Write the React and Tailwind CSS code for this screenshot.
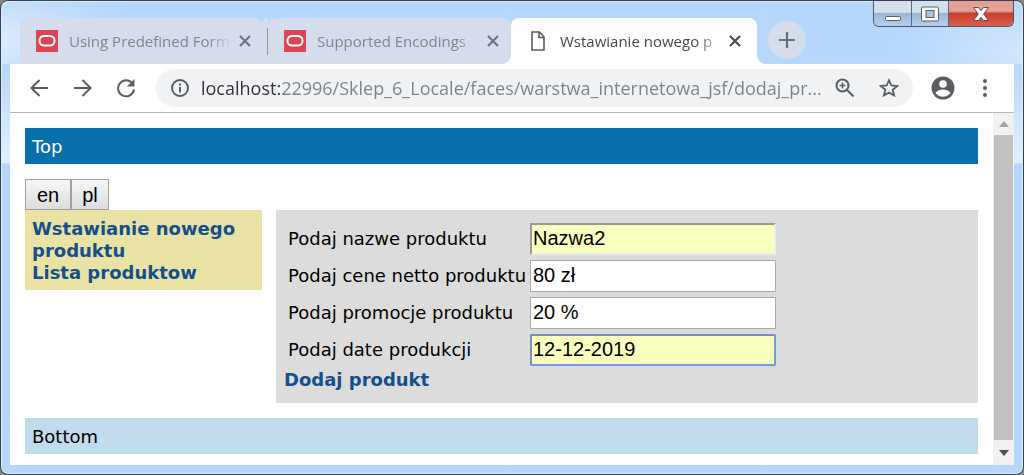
import React, { useState } from "react";

const CloseIcon = () => (
  <svg width="12" height="12" viewBox="0 0 12 12" fill="none" stroke="currentColor" strokeWidth="2.2">
    <path d="M1 1l10 10M11 1L1 11" />
  </svg>
);

const BrandIcon = () => (
  <svg className="shrink-0" width="22" height="22" viewBox="0 0 22 22">
    <rect width="22" height="22" fill="#df4456" />
    <rect x="3.5" y="6" width="15" height="9.5" rx="4.5" fill="none" stroke="#fff" strokeWidth="2" />
  </svg>
);

const FileIcon = () => (
  <svg className="shrink-0" width="14" height="20" viewBox="0 0 14 20" fill="none" stroke="#5a5d61" strokeWidth="1.6">
    <path d="M1 1h7.5L13 6v13H1z" />
    <path d="M8 1v5.5h5" />
  </svg>
);

const Tab = ({ title, icon, active }) => (
  <div
    className={`relative flex h-[46px] items-center rounded-t-lg ${
      active ? "w-[246px] bg-white pr-4 pl-5 text-[#45484c]" : "w-[243px] bg-[#d5dceb] pr-3 pl-4 text-[#7c8695]"
    }`}
  >
    {icon}
    <span
      className={`whitespace-nowrap ${
        active
          ? "ml-[15px] [mask-image:linear-gradient(to_right,black_88%,transparent_112%)]"
          : "ml-[11px] [mask-image:linear-gradient(to_right,black_140px,transparent_162px)]"
      }`}
    >
      {title}
    </span>
    <button aria-label="Close tab" className={`ml-auto ${active ? "text-[#4b4e52]" : "text-[#6b7480]"}`}>
      <CloseIcon />
    </button>
    {active && (
      <>
        <svg className="absolute bottom-0 -left-[9px]" width="9" height="9" viewBox="0 0 9 9" fill="#fff">
          <path d="M9 0v9H0a9 9 0 0 0 9-9z" />
        </svg>
        <svg className="absolute -right-[9px] bottom-0" width="9" height="9" viewBox="0 0 9 9" fill="#fff">
          <path d="M0 0v9h9a9 9 0 0 1-9-9z" />
        </svg>
      </>
    )}
  </div>
);

const WindowControls = () => (
  <div className="ml-auto flex h-[26px] overflow-hidden rounded-b-md border border-t-0 border-[#46566b]">
    <button
      aria-label="Minimize"
      className="flex w-[38px] items-center justify-center border-r border-[#56697f] bg-gradient-to-b from-[#d3e1ef] from-45% via-[#9ab6d3] via-50% to-[#b5d0ea]"
    >
      <svg width="18" height="18" viewBox="0 0 18 18">
        <rect x="1.5" y="11.5" width="15" height="4" rx="1" fill="#fff" stroke="#55606e" />
      </svg>
    </button>
    <button
      aria-label="Maximize"
      className="flex w-[37px] items-center justify-center border-r border-[#56697f] bg-gradient-to-b from-[#d3e1ef] from-45% via-[#9ab6d3] via-50% to-[#b5d0ea]"
    >
      <svg width="18" height="16" viewBox="0 0 18 16">
        <rect x="0.5" y="1" width="17" height="14" rx="1" fill="#f7f9fb" stroke="#55606e" />
        <rect x="5" y="4.5" width="8" height="7" fill="#a9c1da" stroke="#55606e" />
      </svg>
    </button>
    <button
      aria-label="Close"
      className="flex w-[64px] items-center justify-center bg-gradient-to-b from-[#e3a196] from-40% via-[#c93c2b] via-50% to-[#d9614a]"
    >
      <svg width="18" height="16" viewBox="0 0 18 16">
        <path d="M1.5 1.5h5L9 4.7l2.5-3.2h5L11.7 8l4.8 6.5h-5L9 11.3l-2.5 3.2h-5L6.3 8z" fill="#fff" stroke="#6b4a50" />
      </svg>
    </button>
  </div>
);

const Toolbar = () => {
  const [url, setUrl] = useState("localhost:22996/Sklep_6_Locale/faces/warstwa_internetowa_jsf/dodaj_pr...");

  return (
    <div className="flex h-[49px] items-center border-b border-[#b3b5b8] bg-white pr-[27px] pl-5 text-[#5a5d61]">
      <button aria-label="Back">
        <svg width="19" height="18" viewBox="0 0 19 18" fill="none" stroke="currentColor" strokeWidth="2">
          <path d="M18 9H2M9.5 1L1.5 9l8 8" />
        </svg>
      </button>
      <button aria-label="Forward" className="ml-6">
        <svg width="19" height="18" viewBox="0 0 19 18" fill="none" stroke="currentColor" strokeWidth="2">
          <path d="M1 9h16M9.5 1l8 8-8 8" />
        </svg>
      </button>
      <button aria-label="Reload" className="ml-6">
        <svg width="20" height="20" viewBox="0 0 20 20" fill="none" stroke="currentColor" strokeWidth="2">
          <path d="M16.5 5.5A8 8 0 1 0 18 11.5" />
          <path d="M18.5 1v7.5H11z" fill="currentColor" stroke="none" />
        </svg>
      </button>
      <div className="ml-5 flex h-[38px] flex-1 items-center rounded-full bg-[#f0f2f4] px-[14px]">
        <svg className="shrink-0" width="20" height="20" viewBox="0 0 20 20" fill="none" stroke="currentColor" strokeWidth="2">
          <circle cx="10" cy="10" r="8" />
          <path d="M10 9v5.5M10 5.5v2" />
        </svg>
        <input
          type="text"
          aria-label="Address"
          value={url}
          onChange={(e) => setUrl(e.target.value)}
          className="ml-[11px] min-w-0 flex-1 bg-gradient-to-r from-[#303236] from-[79px] to-[#7d8186] to-[79px] bg-clip-text text-[18px] text-transparent caret-black outline-none"
        />
        <button aria-label="Zoom">
          <svg width="20" height="20" viewBox="0 0 20 20" fill="none" stroke="currentColor" strokeWidth="2">
            <circle cx="7.5" cy="7.5" r="6" />
            <path d="M12 12l6.5 6.5" />
            <path d="M7.5 4.5v6M4.5 7.5h6" strokeWidth="1.5" />
          </svg>
        </button>
        <button aria-label="Bookmark" className="ml-6">
          <svg width="20" height="20" viewBox="0 0 20 20" fill="none" stroke="currentColor" strokeWidth="1.8">
            <path d="M10 2.2l2.3 5.3 5.9.5-4.5 3.8 1.4 5.7-5.1-3-5.1 3 1.4-5.7L1.8 8l5.900-.5z" />
          </svg>
        </button>
      </div>
      <button aria-label="Profile" className="ml-[18px]">
        <svg width="24" height="24" viewBox="0 0 24 24">
          <circle cx="12" cy="12" r="11.5" fill="#5a5d61" />
          <circle cx="12" cy="8" r="3.8" fill="#fff" />
          <path d="M4.5 17c1.5-2.5 4.8-3.5 7.5-3.5s6 1 7.5 3.5c-1.7 2.3-4.5 3.7-7.5 3.7S6.200 19.300 4.500 17z" fill="#fff" />
        </svg>
      </button>
      <button aria-label="Menu" className="ml-7">
        <svg width="4" height="20" viewBox="0 0 4 20" fill="currentColor">
          <circle cx="2" cy="3" r="2" />
          <circle cx="2" cy="10" r="2" />
          <circle cx="2" cy="17" r="2" />
        </svg>
      </button>
    </div>
  );
};

const ScrollBar = () => (
  <div className="flex w-[21px] shrink-0 flex-col bg-[#f1f1f1]">
    <button aria-label="Scroll up" className="flex h-[22px] items-center justify-center">
      <svg width="10" height="6" viewBox="0 0 10 6" fill="#a3a3a3">
        <path d="M5 0l5 6H0z" />
      </svg>
    </button>
    <div className="mx-px flex-1 bg-[#c1c1c1]" />
    <button aria-label="Scroll down" className="flex h-[25px] items-center justify-center">
      <svg width="10" height="6" viewBox="0 0 10 6" fill="#4f4f4f">
        <path d="M5 6l5-6H0z" />
      </svg>
    </button>
  </div>
);

const fields = [
  { id: "nazwa", label: "Podaj nazwe produktu", style: "border-2 border-t-[#999] border-l-[#999] border-r-[#ececec] border-b-[#ececec] bg-[#faffbd] px-px" },
  { id: "cena", label: "Podaj cene netto produktu", style: "border border-[#a9a9a9] bg-white px-[2px]" },
  { id: "promocja", label: "Podaj promocje produktu", style: "border border-[#a9a9a9] bg-white px-[2px]" },
  {
    id: "data",
    label: "Podaj date produkcji",
    style: "rounded-xs border-2 border-t-[#7890c0] border-l-[#7890c0] border-r-[#6c9bea] border-b-[#6c9bea] bg-[#faffbd] px-px",
  },
];

const ProductForm = () => {
  const [values, setValues] = useState({
    nazwa: "Nazwa2",
    cena: "80 zł",
    promocja: "20 %",
    data: "12-12-2019",
  });

  const handleChange = (e) => {
    setValues({ ...values, [e.target.id]: e.target.value });
  };

  return (
    <form className="flex-1 bg-[#dcdcdc] px-2 pt-[10px] pb-3" onSubmit={(e) => e.preventDefault()}>
      {fields.map((field) => (
        <div key={field.id} className="flex h-[37px] items-center pl-1">
          <label htmlFor={field.id} className="w-[242px] shrink-0 whitespace-nowrap">
            {field.label}
          </label>
          <input
            id={field.id}
            type="text"
            value={values[field.id]}
            onChange={handleChange}
            className={`h-8 w-[246px] font-['Liberation_Sans',sans-serif] text-[20px] outline-none ${field.style}`}
          />
        </div>
      ))}
      <a href="#dodaj" className="block pt-px font-bold text-[#14508c]">
        Dodaj produkt
      </a>
    </form>
  );
};

const Page = () => (
  <div className="min-w-0 flex-1 p-[15px] pb-[11px] font-['DejaVu_Sans',sans-serif] text-[18px] leading-[22px] text-black">
    <header className="bg-[#086faa] px-[7px] pt-2 pb-[6px] text-white">Top</header>
    <div className="mt-[15px] flex font-['Liberation_Sans',sans-serif] text-[20px]">
      <button className="h-[31px] border border-[#a0a0a0] bg-gradient-to-b from-[#f6f6f6] to-[#dddddd] px-[11px]">en</button>
      <button className="h-[31px] border border-[#a0a0a0] bg-gradient-to-b from-[#f6f6f6] to-[#dddddd] px-[10px]">pl</button>
    </div>
    <div className="flex items-start gap-[14px]">
      <nav className="w-[237px] shrink-0 bg-[#eae2a4] px-[7px] pt-2 pb-[6px] font-bold text-[#14508c]">
        <a href="#wstawianie" className="block">Wstawianie nowego produktu</a>
        <a href="#lista" className="block">Lista produktow</a>
      </nav>
      <ProductForm />
    </div>
    <footer className="mt-[15px] bg-[#c0dcec] px-[7px] pt-2 pb-[6px]">Bottom</footer>
  </div>
);

const App = () => {
  return (
    <div className="min-h-screen bg-[#8c8580]">
      <div className="flex min-h-screen flex-col overflow-hidden rounded-lg border border-[#37414f] bg-[#b5d7fb] bg-gradient-to-b from-[#b5d7fb] from-[60px] via-[#e2f0fe] via-[162px] to-[#b5d7fb] to-[163px] px-[9px] pb-[9px] font-['Open_Sans',sans-serif] text-[15px] inset-shadow-[0_0_0_1px_#d9ebfd]">
        {/* Tab strip, with a soft glass glow in both corners */}
        <div className="-mx-[8px] flex h-[63px] items-start bg-[radial-gradient(ellipse_130px_60px_at_0_40px,#dcebfd,transparent),radial-gradient(ellipse_130px_60px_at_100%_50px,#d3e6fd,transparent)] px-[8px]">
          <div className="flex pt-[17px] pl-[10px]">
            <Tab title="Using Predefined Form" icon={<BrandIcon />} />
            <div className="flex w-[5px] items-center justify-end bg-[#d5dceb]">
              <div className="h-[27px] w-px bg-[#8f9aa8]" />
            </div>
            <Tab title="Supported Encodings" icon={<BrandIcon />} />
            <Tab title="Wstawianie nowego p" icon={<FileIcon />} active />
          </div>
          <button
            aria-label="New tab"
            className="mt-[20px] ml-[11px] flex size-[38px] items-center justify-center rounded-full bg-[#d3ddec] text-[#66707c]"
          >
            <svg width="16" height="16" viewBox="0 0 16 16" stroke="currentColor" strokeWidth="2.2">
              <path d="M8 0v16M0 8h16" />
            </svg>
          </button>
          <WindowControls />
        </div>

        <Toolbar />

        <div className="flex flex-1 bg-white">
          <Page />
          <ScrollBar />
        </div>
      </div>
    </div>
  );
};

export default App;
